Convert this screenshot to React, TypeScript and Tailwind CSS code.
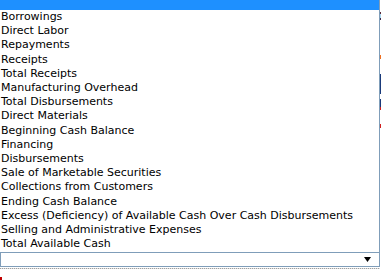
const options = [
  'Borrowings',
  'Direct Labor',
  'Repayments',
  'Receipts',
  'Total Receipts',
  'Manufacturing Overhead',
  'Total Disbursements',
  'Direct Materials',
  'Beginning Cash Balance',
  'Financing',
  'Disbursements',
  'Sale of Marketable Securities',
  'Collections from Customers',
  'Ending Cash Balance',
  'Excess (Deficiency) of Available Cash Over Cash Disbursements',
  'Selling and Administrative Expenses',
  'Total Available Cash',
];

/**
 * 開いたドロップダウン
 */
export default function App() {
  return (
    <div
      className="relative w-[381px] h-[280px] bg-white overflow-hidden text-black"
      style={{ fontFamily: '"DejaVu Sans", Verdana, sans-serif' }}
    >
      <div className="flex">
        {/* リスト */}
        <div className="w-[380px] border-r border-[#7f9db9]">
          <div className="h-[10px] bg-[#1e90ff]"></div>
          <div className="h-[242px]">
            {options.map((o) => (
              <div key={o} className="pl-[1px] text-[11px] leading-[14.2px] whitespace-nowrap">
                {o}
              </div>
            ))}
          </div>
        </div>
        {/* 下のページの端 */}
        <div className="w-[1px] flex flex-col">
          <div className="h-[12px]"></div>
          <div className="h-[2px] bg-[#5a2a3a]"></div>
          <div className="h-[4px] bg-[#a8d8f0]"></div>
          <div className="h-[2px] bg-[#3a2a4a]"></div>
          <div className="h-[35px]"></div>
          <div className="h-[4px] bg-[#f07020]"></div>
          <div className="h-[15px]"></div>
          <div className="h-[20px] bg-[#1a3a7a]"></div>
          <div className="h-[5px]"></div>
          <div className="h-[8px] bg-[#1a3a7a]"></div>
          <div className="h-[3px] bg-[#d02020]"></div>
          <div className="h-[14px]"></div>
          <div className="h-[4px] bg-[#d02020]"></div>
        </div>
      </div>
      {/* セレクトボックス */}
      <div className="w-[380px] h-[15px] border border-[#7f9db9] flex items-center justify-end pr-[8px]">
        <svg width="7" height="5" viewBox="0 0 7 5">
          <path d="M0 0 H7 L3.5 5 Z" fill="#000" />
        </svg>
      </div>
      <div className="w-[380px] h-[1px] mt-[1px] bg-[repeating-linear-gradient(90deg,#a0a0a0_0_1px,#e0e0e0_1px_2px)]"></div>
      <div className="absolute left-0 top-[277px] w-[2px] h-[3px] bg-[#c00000]"></div>
    </div>
  );
}
